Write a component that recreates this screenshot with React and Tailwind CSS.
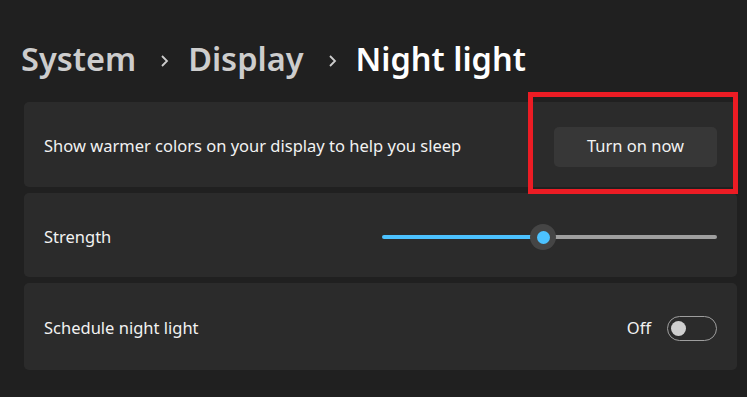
export default function App() {
  const font = { fontFamily: '"Noto Sans", "Open Sans", sans-serif' };

  return (
    <div
      className="relative w-[747px] h-[397px] overflow-hidden bg-[#202020] text-white"
      style={font}
    >
      {/* breadcrumb title */}
      <div className="flex items-center h-[100px] pl-[21px] pt-[18px] text-[32.5px] font-semibold leading-none">
        <span className="text-[#cdcdcd]">System</span>
        <svg className="ml-[24px] mr-[19px] mt-[3px]" width="9" height="14" viewBox="0 0 9 14">
          <path d="M2 2 L7 7 L2 12" fill="none" stroke="#cdcdcd" strokeWidth="1.8" />
        </svg>
        <span className="text-[#cdcdcd]">Display</span>
        <svg className="ml-[24px] mr-[19px] mt-[3px]" width="9" height="14" viewBox="0 0 9 14">
          <path d="M2 2 L7 7 L2 12" fill="none" stroke="#cdcdcd" strokeWidth="1.8" />
        </svg>
        <span>Night light</span>
      </div>

      <div className="flex flex-col gap-[6px] pl-[24px] pr-[10px] mt-[2px]">
        <div className="flex items-center justify-between h-[85px] px-[20px] pt-[4px] rounded-[5px] bg-[#2b2b2b]">
          <span className="text-[16.5px] text-[#f2f2f2]">
            Show warmer colors on your display to help you sleep
          </span>
          <button className="w-[163px] h-[40px] rounded-[5px] bg-[#373737] text-[16.5px] text-[#f2f2f2]">
            Turn on now
          </button>
        </div>

        <div className="flex items-center justify-between h-[84px] px-[20px] pt-[4px] rounded-[5px] bg-[#2b2b2b]">
          <span className="text-[16.5px] text-[#f2f2f2]">Strength</span>
          <div className="relative flex items-center w-[335px] h-[26px]">
            <div className="h-[4px] w-[161px] rounded-l-full bg-[#4cc2ff]" />
            <div className="h-[4px] flex-1 rounded-r-full bg-[#9f9f9f]" />
            <div className="absolute left-[148px] top-0 flex items-center justify-center w-[26px] h-[26px] rounded-full bg-[#454545]">
              <div className="w-[13px] h-[13px] rounded-full bg-[#4cc2ff]" />
            </div>
          </div>
        </div>

        <div className="flex items-center justify-between h-[87px] px-[20px] pt-[4px] rounded-[5px] bg-[#2b2b2b]">
          <span className="text-[16.5px] text-[#f2f2f2]">Schedule night light</span>
          <div className="flex items-center gap-[16px]">
            <span className="text-[16.5px] text-[#f2f2f2]">Off</span>
            <div className="flex items-center w-[50px] h-[25px] rounded-full border-[1.5px] border-[#9e9e9e] px-[3px]">
              <div className="w-[15px] h-[15px] rounded-full bg-[#cfcfcf]" />
            </div>
          </div>
        </div>
      </div>

      {/* highlight box */}
      <div className="absolute left-[528px] top-[92px] w-[210px] h-[102px] border-[5px] border-[#ec1c24]" />
    </div>
  );
}
